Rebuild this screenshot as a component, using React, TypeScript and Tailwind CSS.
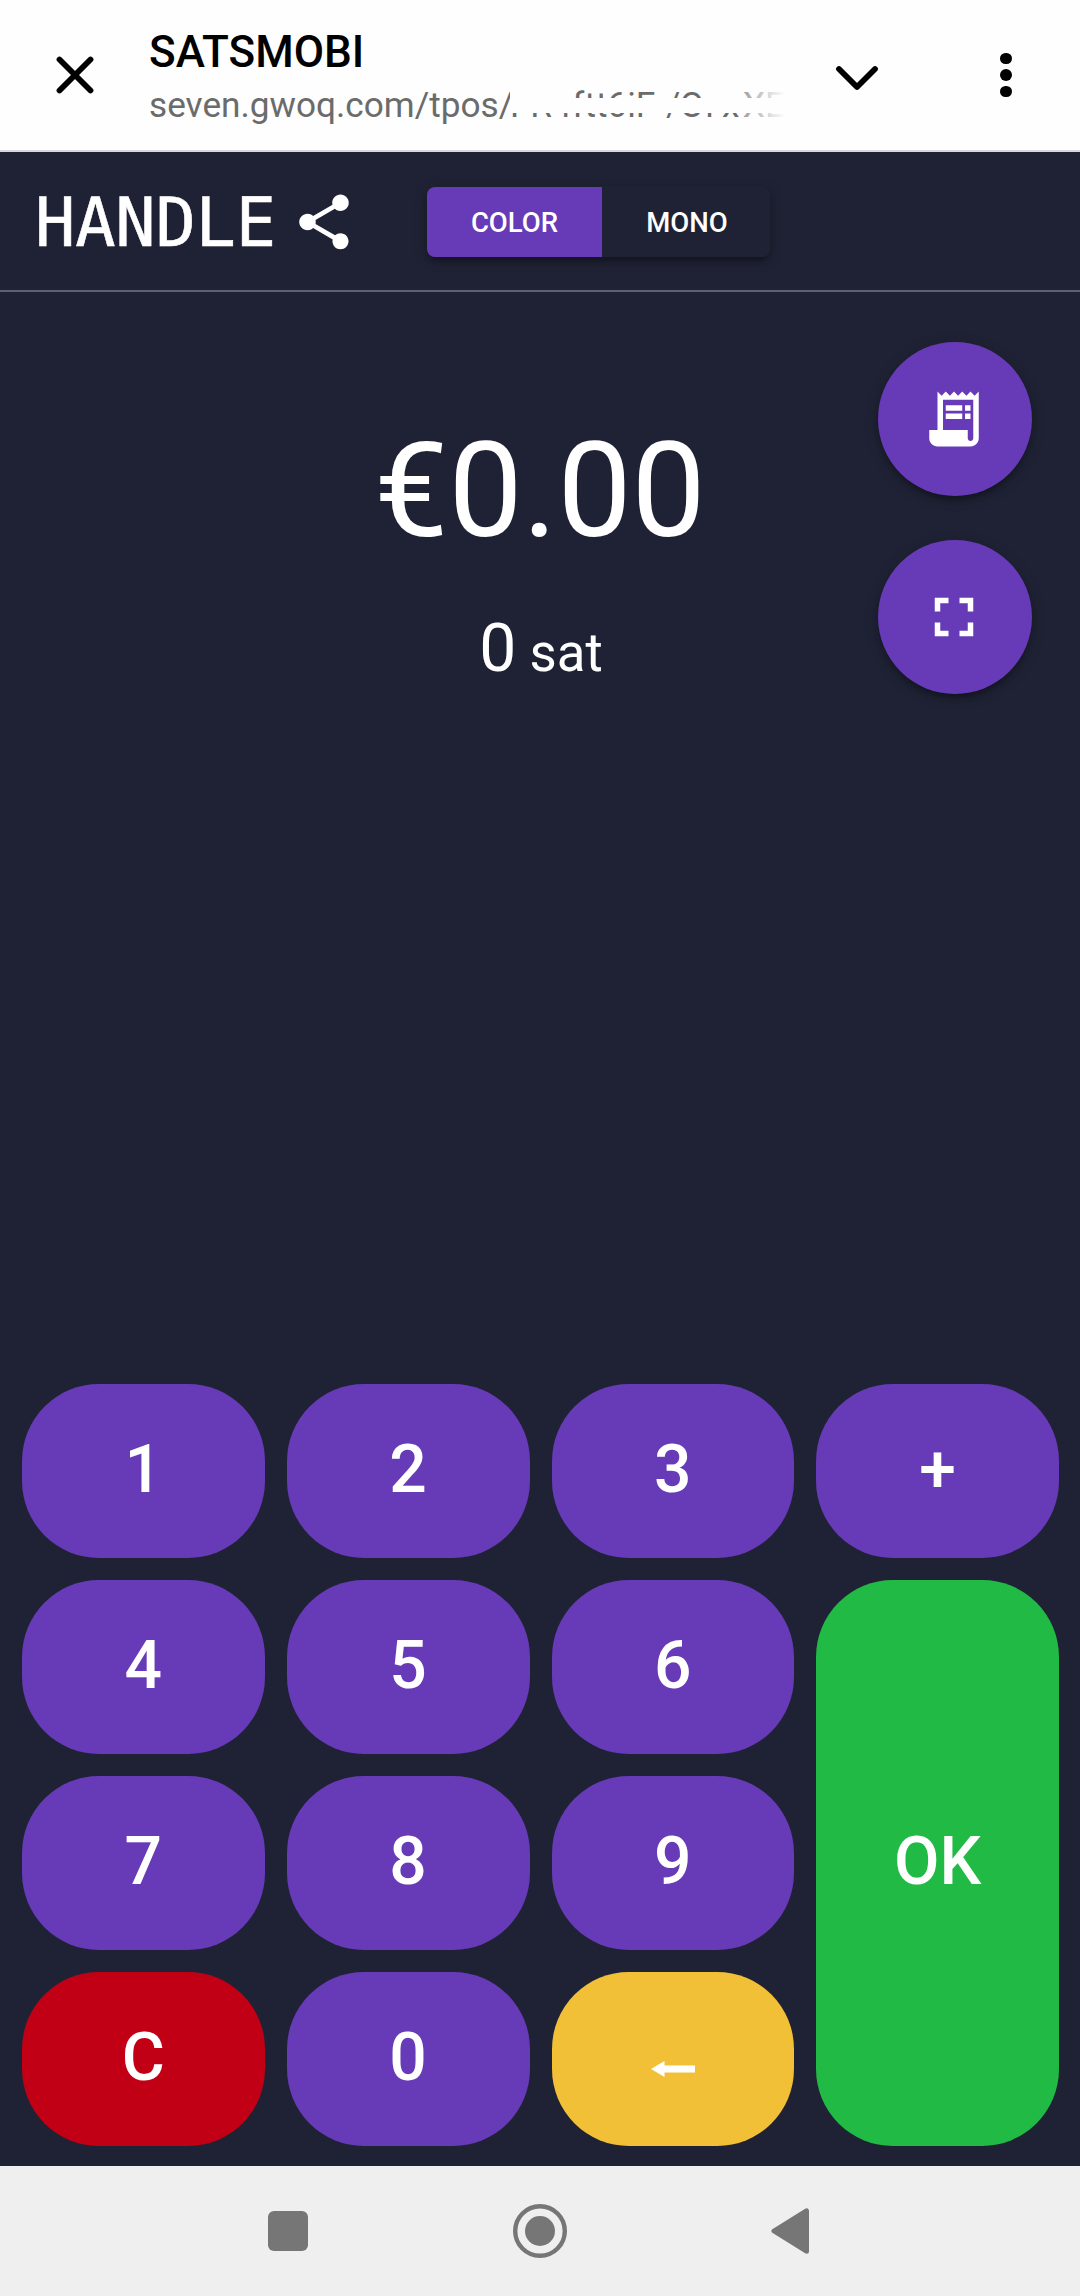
import type { ReactNode } from "react";
import { MdFullscreen, MdReceiptLong, MdShare } from "react-icons/md";

type KeyProps = { children: ReactNode; className?: string };

function Key({ children, className = "bg-[#673ab7]" }: KeyProps) {
  return (
    <button
      className={`flex items-center justify-center rounded-[77px] pb-[3px] text-[66px] leading-none font-medium text-white ${className}`}
    >
      {children}
    </button>
  );
}

// Address path whose characters are mostly hidden behind white strips.
function HiddenPath() {
  return (
    <div className="relative flex h-[42px] w-[275px] overflow-hidden">
      <span className="w-[21px]">F</span>
      <span className="w-[22px]">R</span>
      <span className="w-[21px]">4</span>
      <span className="w-[13px]">f</span>
      <span className="w-[12px]">t</span>
      <span className="w-[11px]">t</span>
      <span className="w-[21px]">6</span>
      <span className="w-[9px]">i</span>
      <span className="w-[31px]">F</span>
      <span className="w-[14px]">/</span>
      <span className="w-[27px]">O</span>
      <span className="w-[17px]">r</span>
      <span className="w-[22px]">x</span>
      <span className="w-[22px]">X</span>
      <span>E</span>
      <span className="absolute top-0 left-0 h-[18px] w-[64px] bg-[#fefefe]" />
      <span className="absolute top-[14px] left-0 h-[15px] w-full bg-[#fefefe]" />
      <span className="absolute top-[34px] left-0 h-[8px] w-full bg-[#fefefe]" />
      <span className="absolute top-0 right-0 h-full w-[40px] bg-linear-to-r from-[#fefefe]/40 to-[#fefefe]" />
    </div>
  );
}

function BrowserBar() {
  return (
    <header className="flex h-[152px] border-b-2 border-[#d5d6e6] bg-[#fefefe] text-black">
      <div className="flex w-[149px] shrink-0 items-center justify-center pl-[1px]">
        <svg className="size-[44px]" viewBox="0 0 44 44" fill="none" stroke="currentColor" strokeWidth="5.8" strokeLinecap="round">
          <path d="M6.500 6.500 37.500 37.500M37.500 6.500 6.500 37.500" />
        </svg>
      </div>
      <div className="w-[641px] shrink-0 pt-[26px]">
        <h1 className="text-[44px] leading-[52px] font-medium whitespace-nowrap">SATSMOBI</h1>
        <div className="mt-[6px] flex h-[46px] text-[35.2px] leading-[42px] whitespace-nowrap text-[#6b6b6b]">
          <span className="w-[361px] shrink-0">seven.gwoq.com/tpos/</span>
          <HiddenPath />
        </div>
      </div>
      <div className="flex w-[134px] shrink-0 items-center justify-center pt-[4px]">
        <svg className="size-[48px]" viewBox="0 0 48 48" fill="none" stroke="currentColor" strokeWidth="5.8" strokeLinecap="round" strokeLinejoin="round">
          <path d="M6 16 24 34 42 16" />
        </svg>
      </div>
      <div className="flex w-[156px] shrink-0 flex-col items-center justify-center gap-[5px] pl-[8px]">
        <span className="size-[11.5px] rounded-full bg-black" />
        <span className="size-[11.5px] rounded-full bg-black" />
        <span className="size-[11.5px] rounded-full bg-black" />
      </div>
    </header>
  );
}

export default function App() {
  return (
    <div className="flex h-[2296px] w-[1080px] flex-col overflow-hidden bg-[#1f2234] font-['Roboto',sans-serif] text-white">
      <BrowserBar />
      <div className="flex h-[140px] items-center border-b-2 border-[#5f6173] pt-[2px] pl-[35px]">
        <span className="w-[256px] pt-[3px] font-['DejaVu_Sans_Mono',monospace] text-[67px] leading-none tracking-[-0.2px] [-webkit-text-stroke:0.6px_white]">
          HANDLE
        </span>
        <MdShare className="size-[66px]" />
        <div className="ml-[70px] flex h-[70px] rounded-[8px] text-[27.5px] font-medium shadow-[0_3px_14px_rgba(0,0,0,0.2),0_5px_5px_rgba(0,0,0,0.14),0_8px_3px_-5px_rgba(0,0,0,0.12)]">
          <button className="w-[175px] rounded-l-[8px] bg-[#673ab7] pt-[2px]">COLOR</button>
          <button className="w-[168px] rounded-r-[8px] bg-[#1f2234] pt-[2px] pl-[2px]">MONO</button>
        </div>
      </div>
      <main className="relative flex flex-1 flex-col items-center pt-[122px]">
        <div className="text-[132px] leading-[155px]">€0.00</div>
        <div className="mt-[41px] pl-[2px] text-[66px] leading-[78px]">
          0<span className="ml-[13px] text-[52.8px]">sat</span>
        </div>
        <div className="absolute top-[50px] right-[48px] flex flex-col gap-[44px]">
          <button className="flex size-[154px] items-center justify-center rounded-full bg-[#673ab7] pr-[2px] shadow-[0_3px_14px_rgba(0,0,0,0.2),0_5px_5px_rgba(0,0,0,0.14),0_8px_3px_-5px_rgba(0,0,0,0.12)]">
            <MdReceiptLong className="size-[66px]" />
          </button>
          <button className="flex size-[154px] items-center justify-center rounded-full bg-[#673ab7] pr-[2px] shadow-[0_3px_14px_rgba(0,0,0,0.2),0_5px_5px_rgba(0,0,0,0.14),0_8px_3px_-5px_rgba(0,0,0,0.12)]">
            <MdFullscreen className="size-[66px]" />
          </button>
        </div>
      </main>
      <section className="grid h-[782px] grid-cols-4 grid-rows-[repeat(4,174px)] gap-[22px] pr-[21px] pl-[22px]">
        <Key>1</Key>
        <Key>2</Key>
        <Key>3</Key>
        <Key>+</Key>
        <Key>4</Key>
        <Key>5</Key>
        <Key>6</Key>
        <Key className="row-span-3 bg-[#21ba45]">OK</Key>
        <Key>7</Key>
        <Key>8</Key>
        <Key>9</Key>
        <Key className="bg-[#c10015]">C</Key>
        <Key>0</Key>
        <Key className="bg-[#f2c037] pt-[23px]">
          <svg className="h-[16px] w-[44px]" viewBox="0 0 44 16" fill="currentColor">
            <path d="M0 8 13.500 0V4.500H44V11.500H13.500V16Z" />
          </svg>
        </Key>
      </section>
      <nav className="grid h-[130px] grid-cols-[576px_1fr] bg-[#efefef] text-[#767676]">
        <div className="flex items-center justify-between pl-[268px]">
          <span className="size-[40px] rounded-[6px] bg-[#767676]" />
          <svg className="mr-[9px] size-[54px]" viewBox="0 0 54 54">
            <circle cx="27" cy="27" r="24.800" fill="none" stroke="currentColor" strokeWidth="4.400" />
            <circle cx="27" cy="27" r="15" fill="currentColor" />
          </svg>
        </div>
        <div className="flex items-center pl-[195px]">
          <svg className="h-[46px] w-[38px]" viewBox="0 0 38 46" fill="currentColor" stroke="currentColor" strokeWidth="5" strokeLinejoin="round">
            <path d="M3 23 35.500 2.800V43.200Z" />
          </svg>
        </div>
      </nav>
    </div>
  );
}
